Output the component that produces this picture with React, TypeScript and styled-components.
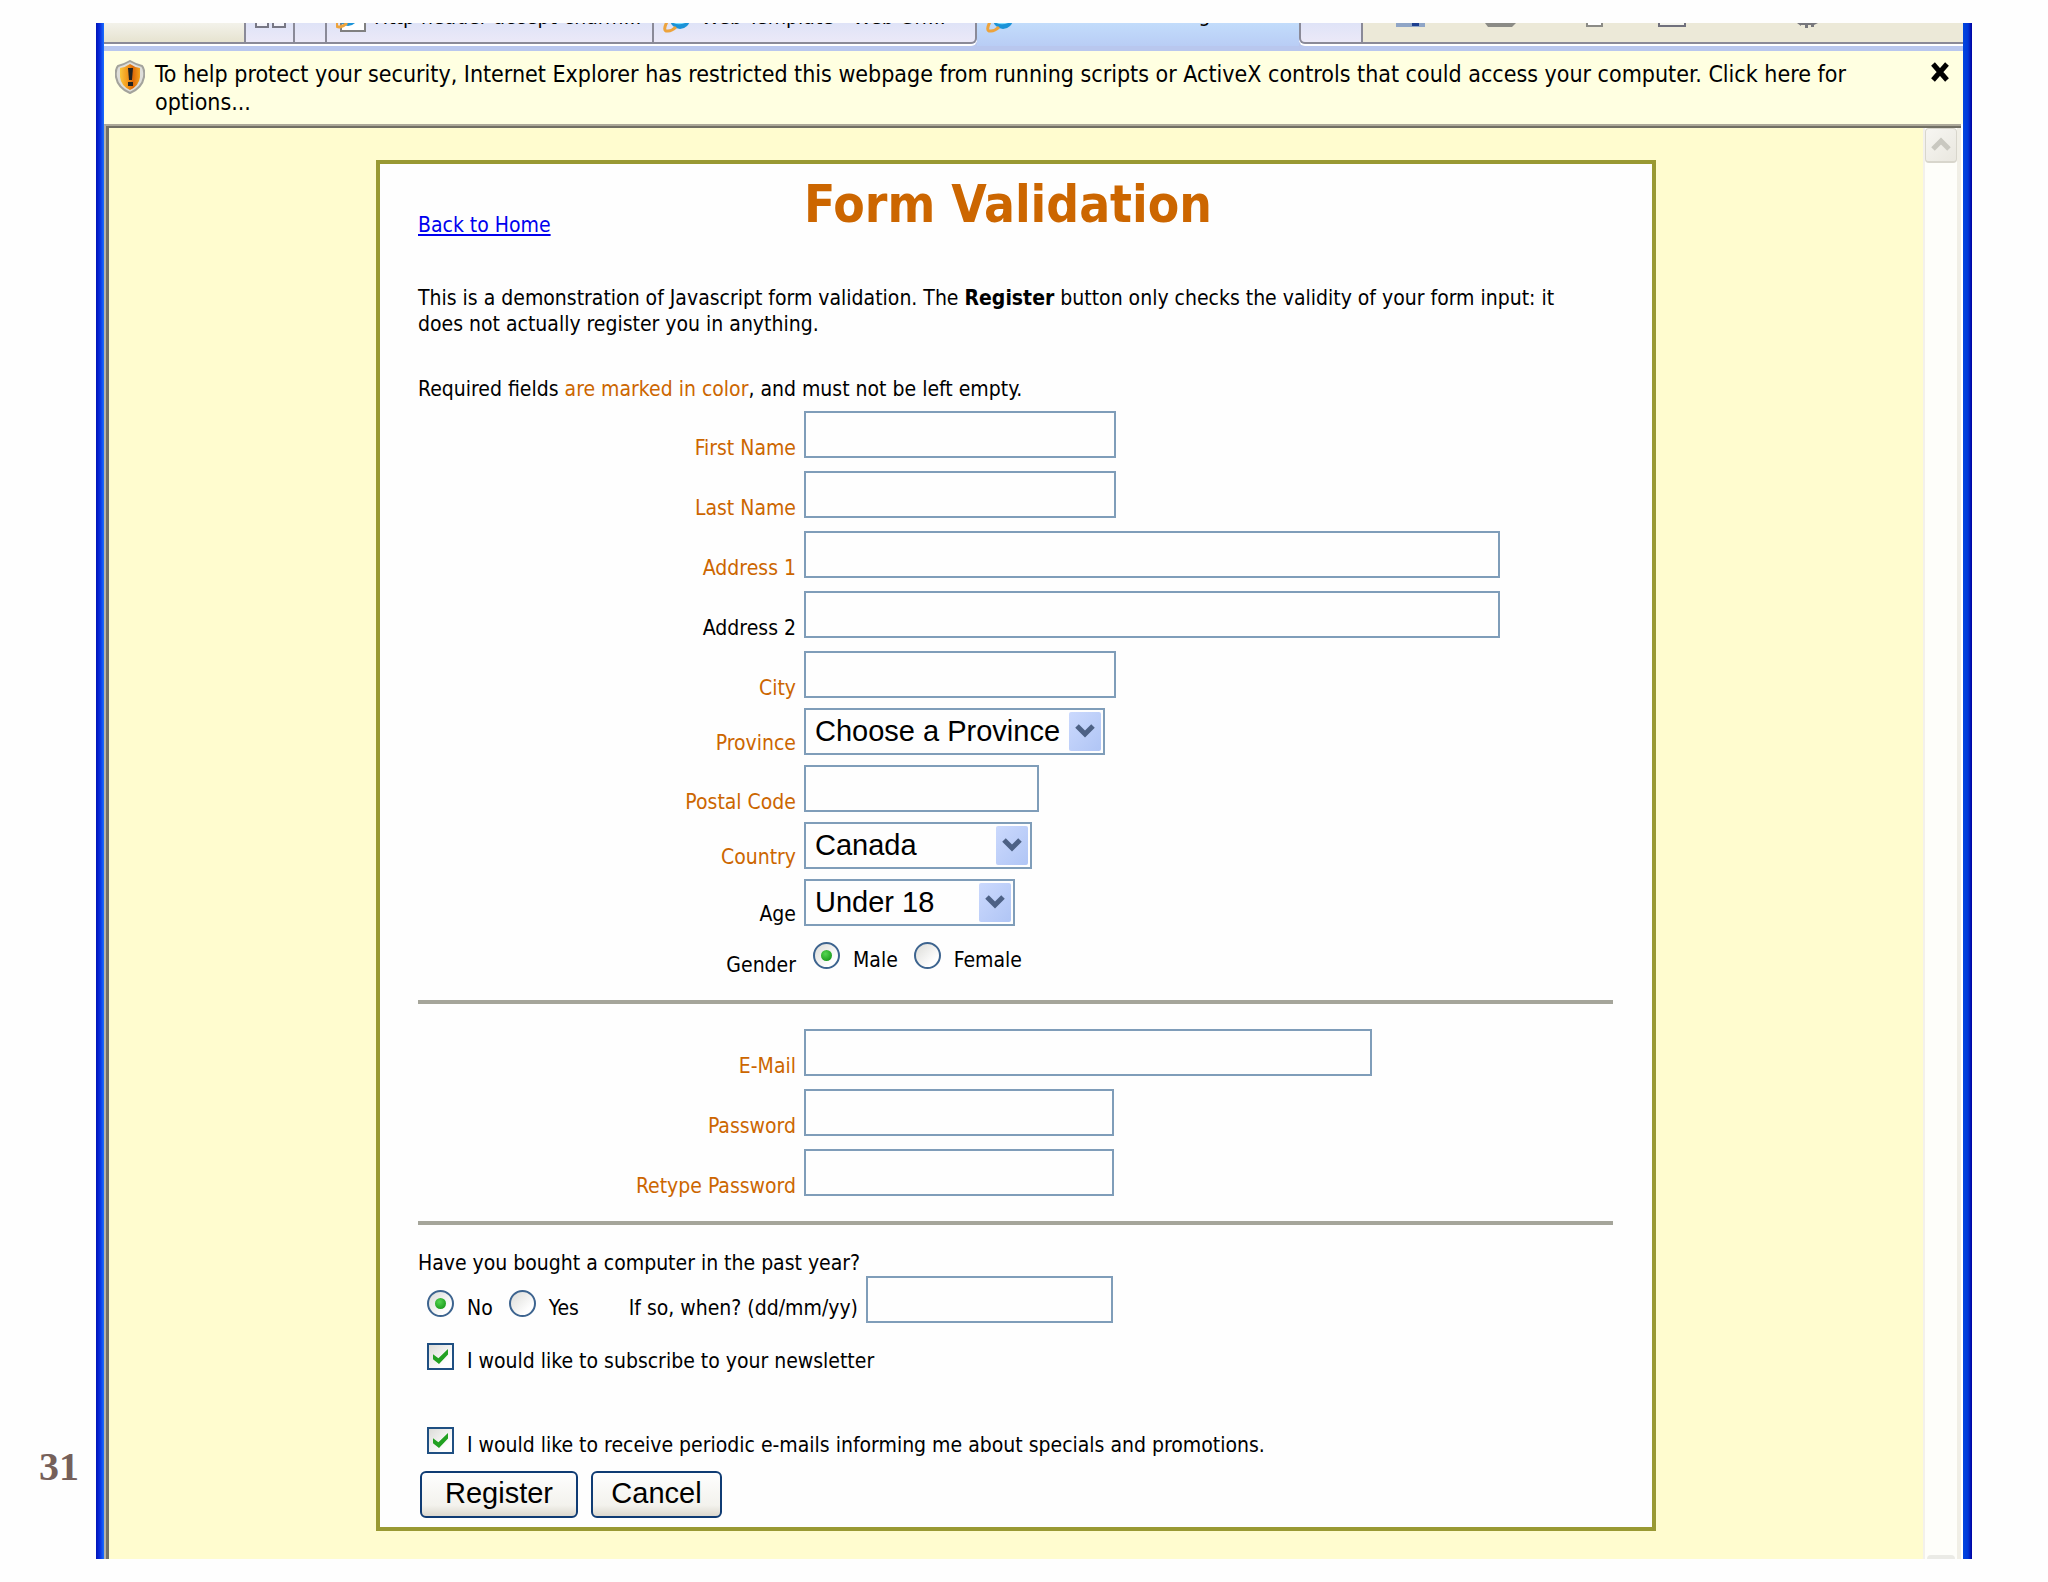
import React, { useState } from "react";
import styled, { createGlobalStyle, css } from "styled-components";

const uiFont = `"DejaVu Sans Condensed", "DejaVu Sans", "Noto Sans", sans-serif`;
const controlFont = `"Liberation Sans", Arial, sans-serif`;
const orange = "#cc6600";
const fieldBorder = "#7f9db9";

const GlobalStyle = createGlobalStyle`
  *, *::before, *::after { box-sizing: border-box; }
  body {
    margin: 0;
    background: #fefefe;
    color: #000;
    font-family: ${uiFont};
    font-stretch: condensed;
    font-size: 21px;
    line-height: 26px;
  }
`;

const Slide = styled.div`
  display: grid;
  grid-template-columns: 96px minmax(0, 1fr) 76px;
  padding: 23px 0;
`;

const PageNumber = styled.div`
  align-self: end;
  padding: 0 17px 72px 0;
  text-align: right;
  font: bold 40px/40px "Liberation Serif", "Times New Roman", serif;
  color: #75605a;
`;

const BrowserWindow = styled.div`
  padding: 0 9px 0 8px;
  background:
    linear-gradient(90deg, #0014b8 0, #0a2fe0 4px, #1a70ff 8px) left / 8px 100% no-repeat,
    linear-gradient(90deg, #0046e0 0, #0038d8 5px, #0000a0 9px) right / 9px 100% no-repeat,
    #fff;
`;

const TabStrip = styled.div`
  display: flex;
  height: 28px;
  overflow: hidden;
  background: #b9c7ee;
  padding-bottom: 5px;
`;

const StripSpace = styled.div<{ $grow?: boolean }>`
  flex: ${(p) => (p.$grow ? "1 1 0" : "0 1 140px")};
  display: flex;
  padding-left: ${(p) => (p.$grow ? "33px" : "0")};
  background: ${(p) => (p.$grow ? "#ece9d8" : "linear-gradient(#f3f2ea, #e6e3d0)")};
  border-bottom: 2px solid #8a8a98;
  box-shadow: 0 2px #fff;
  margin-bottom: 2px;
`;

const Tab = styled.button<{ $width: number; $active?: boolean; $round?: "left" | "right" }>`
  flex: 0 1 ${(p) => p.$width}px;
  min-width: 0;
  display: flex;
  align-items: flex-end;
  gap: 8px;
  overflow: hidden;
  white-space: nowrap;
  margin: 0 0 2px;
  padding: 0 0 ${(p) => (p.$active ? "13px" : "9px")} 9px;
  border: 0 solid #8a8a98;
  border-bottom-width: 2px;
  border-left-width: 2px;
  background: linear-gradient(#dfe3f7, #ebe9f8);
  box-shadow: 0 2px #fff;
  color: #000;
  font: 21px/26px ${uiFont};
  ${(p) => p.$round === "right" && css`border-right-width: 2px; border-bottom-right-radius: 6px;`}
  ${(p) => p.$round === "left" && css`border-right-width: 2px; border-bottom-left-radius: 6px;`}
  ${(p) =>
    p.$active &&
    css`
      margin: 0;
      border: 0;
      box-shadow: none;
      background: linear-gradient(#c2dcfb, #b9cdf5);
    `}
`;

const TabTitle = styled.span<{ $active?: boolean }>`
  padding-bottom: ${(p) => (p.$active ? 5 : 3)}px;
`;

const TabArt = styled.svg`
  flex: none;
  display: block;
`;

const InfoBar = styled.div`
  display: grid;
  grid-template-columns: 30px minmax(0, 1fr) 20px;
  column-gap: 10px;
  align-items: start;
  padding: 9px 13px 8px 11px;
  background: #ffffe1;
  font-size: 23px;
  line-height: 28px;
`;

const InfoText = styled.p`
  margin: 0;
  padding-right: 60px;
`;

const CloseButton = styled.button`
  padding: 2px 0;
  border: 0;
  background: none;
  line-height: 0;
`;

const Viewport = styled.div`
  border-top: 2px solid #aca899;
  border-left: 2px solid #b5b2a8;
  margin-right: 2px;
`;

const ScrollPane = styled.div`
  display: grid;
  grid-template-columns: minmax(0, 1fr) 38px;
  border-top: 2px solid #716f64;
  border-left: 3px solid #716f64;
`;

const Page = styled.main`
  padding: 32px 20px 28px;
  background: #fffccf;
`;

const ScrollTrack = styled.div`
  display: flex;
  flex-direction: column;
  justify-content: space-between;
  align-items: center;
  overflow: hidden;
  border-left: 2px solid #f3f1ec;
  border-right: 4px solid #f1efe6;
  background: #fefefa;
`;

const ScrollButton = styled.button`
  width: 32px;
  height: 35px;
  padding: 0;
  border: 1px solid #d8d6cc;
  border-bottom-width: 2px;
  border-radius: 4px;
  background: linear-gradient(135deg, #f7f6f2, #e9e7df);
  line-height: 0;
`;

const TrackEnd = styled.div`
  width: 28px;
  height: 4px;
  border-radius: 4px 4px 0 0;
  background: #ebebe6;
`;

const Card = styled.form`
  max-width: 1280px;
  margin: 0 auto;
  padding: 8px 39px 9px 38px;
  border: 4px solid #999933;
  background: #fefefe;
`;

const columns = css`
  display: grid;
  grid-template-columns: 378px minmax(0, 1fr);
  column-gap: 8px;
  align-items: end;
`;

const Header = styled.header`
  ${columns}
`;

const Title = styled.h1`
  margin: 0;
  font-size: 51px;
  line-height: 66px;
  font-weight: bold;
  color: ${orange};
`;

const BackLink = styled.a`
  justify-self: start;
  color: #0000ee;
  text-decoration: underline;
`;

const Paragraph = styled.p<{ $top: number }>`
  margin: ${(p) => p.$top}px 0 0;
  padding-right: 40px;
`;

const Required = styled.span`
  color: ${orange};
`;

const FieldGroup = styled.div<{ $gap: number; $top?: number }>`
  display: grid;
  row-gap: ${(p) => p.$gap}px;
  margin-top: ${(p) => p.$top ?? 0}px;
`;

const Row = styled.div`
  ${columns}
`;

const FieldLabel = styled.label<{ $required?: boolean; $raised?: boolean }>`
  text-align: right;
  line-height: ${(p) => (p.$raised ? 24 : 20)}px;
  color: ${(p) => (p.$required ? orange : "#000")};
`;

const TextBox = styled.input<{ $width: number }>`
  width: ${(p) => p.$width}px;
  max-width: 100%;
  height: 47px;
  padding: 0 8px;
  border: 2px solid ${fieldBorder};
  border-radius: 0;
  background: #fefefe;
  font: 29px ${controlFont};
`;

const SelectFrame = styled.span<{ $width: number }>`
  display: grid;
  grid-template-columns: minmax(0, 1fr) 32px;
  align-items: center;
  width: ${(p) => p.$width}px;
  height: 47px;
  padding-right: 2px;
  border: 2px solid ${fieldBorder};
  background: #fefefe;
`;

const SelectBox = styled.select`
  grid-area: 1 / 1 / 2 / 3;
  appearance: none;
  height: 43px;
  padding: 0 36px 2px 9px;
  border: 0;
  background: transparent;
  color: #000;
  font: 29px ${controlFont};
`;

const SelectArrow = styled.svg`
  grid-area: 1 / 2 / 2 / 3;
  pointer-events: none;
`;

const Options = styled.div<{ $top?: number }>`
  display: flex;
  align-items: flex-end;
  gap: 7px;
  padding: ${(p) => p.$top ?? 0}px 0 2px;
`;

const OptionLabel = styled.label<{ $top?: number }>`
  display: flex;
  align-items: flex-end;
  gap: 13px;
  padding-left: 9px;
  margin-top: ${(p) => p.$top ?? 0}px;
`;

const choice = css`
  appearance: none;
  flex: none;
  display: grid;
  place-items: center;
  width: 27px;
  height: 27px;
  margin: 0 0 4px;
  border: 2px solid #1f4f82;
  background: linear-gradient(135deg, #dcdcd8, #fefefe 75%);
`;

const Radio = styled.input.attrs({ type: "radio" })`
  ${choice}
  border-color: #3d648f;
  border-radius: 50%;
  &:checked::before {
    content: "";
    width: 11px;
    height: 11px;
    border-radius: 50%;
    background: radial-gradient(circle at 40% 35%, #55d551, #21a121 70%);
  }
`;

const Checkbox = styled.input.attrs({ type: "checkbox" })`
  ${choice}
  &:checked::before {
    content: "";
    width: 15px;
    height: 15px;
    background: #21a121;
    clip-path: polygon(0 35%, 36% 62%, 100% 0, 100% 36%, 40% 100%, 0 68%);
  }
`;

const WhenLabel = styled.label`
  margin-left: auto;
`;

const WhenRow = styled.div`
  display: grid;
  grid-template-columns: 440px minmax(0, 1fr);
  column-gap: 8px;
  align-items: end;
`;

const Divider = styled.hr`
  height: 4px;
  margin: 25px 0;
  border: 0;
  background: #a5a59a;
`;

const Buttons = styled.div`
  display: flex;
  gap: 13px;
  margin-top: 13px;
  padding-left: 2px;
`;

const Button = styled.button<{ $width: number }>`
  width: ${(p) => p.$width}px;
  height: 47px;
  padding: 0 0 3px;
  border: 2px solid #0f3b73;
  border-radius: 6px;
  background: linear-gradient(#fefefe, #f3f2ed 75%, #dcd8ce);
  color: #000;
  font: 29px ${controlFont};
`;

const PageIcon = ({ sheet = false }: { sheet?: boolean }) => (
  <TabArt width="30" height="30" viewBox="0 0 30 30" aria-hidden="true">
    {sheet && <path d="M5 2H29V28H5Z" fill="#fff" stroke="#808080" strokeWidth="2" />}
    <circle cx={sheet ? 12 : 17} cy={sheet ? 13 : 16} r="10" fill="#1b93d8" />
    <path d={sheet ? "M6 15Q12 19 20 14" : "M10 18Q16 22 25 17"} stroke="#7fdcff" strokeWidth="3" fill="none" />
    <path d={sheet ? "M4 12Q-3 25 4 24Q8 23 11 20" : "M6 15Q-2 29 5 28Q9 28 13 24"} stroke="#eda33c" strokeWidth="3" fill="none" />
  </TabArt>
);

const Shield = () => (
  <svg width="30" height="34" viewBox="0 0 30 34" aria-hidden="true">
    <defs>
      <linearGradient id="shield" x1="0" y1="0" x2="1" y2="0">
        <stop offset="0" stopColor="#fbc63e" />
        <stop offset="0.35" stopColor="#f39a1c" />
        <stop offset="0.65" stopColor="#dd6a08" />
        <stop offset="1" stopColor="#f6a31c" />
      </linearGradient>
    </defs>
    <path d="M15 1Q20 4 27 6Q30 9 29 17Q27 28 15 33Q3 28 1 17Q0 9 3 6Q10 4 15 1Z" fill="#dededa" stroke="#a3a39c" strokeWidth="2" />
    <path d="M15 4Q19 7 25 8V17Q24 26 15 30Q6 26 5 17V8Q11 7 15 4Z" fill="url(#shield)" />
    <path d="M13 8H18L17 20H14Z" fill="#222" />
    <rect x="13" y="22" width="5" height="4" fill="#222" />
  </svg>
);

const ToolbarArt = () => (
  <TabArt width="440" height="6" viewBox="0 0 440 6" aria-hidden="true">
    <path d="M0 0H29V4H0Z" fill="#8fa5c6" />
    <path d="M16 0H23V3H16Z" fill="#1d3f8f" />
    <path d="M89 0H120L116 4H92Z" fill="#8b8b86" />
    <path d="M191 0V3H206V0" fill="#fff" stroke="#8b8b86" strokeWidth="2" />
    <path d="M263 0V3H289V0" fill="#f5f5ee" stroke="#70707c" strokeWidth="2" />
    <path d="M401 0H422L418 2V4H415V2H412V5H409V2H405V3Z" fill="#77777c" />
  </TabArt>
);

type Option = { label: string; value: string };

const Select = ({ id, width, options }: { id: string; width: number; options: Option[] }) => (
  <SelectFrame $width={width}>
    <SelectBox id={id} defaultValue={options[0].value}>
      {options.map((o) => (
        <option key={o.value} value={o.value}>{o.label}</option>
      ))}
    </SelectBox>
    <SelectArrow width="32" height="39" viewBox="0 0 32 39" aria-hidden="true">
      <defs>
        <linearGradient id={`${id}-fill`} x1="0" y1="0" x2="1" y2="1">
          <stop offset="0" stopColor="#cbd9fd" />
          <stop offset="1" stopColor="#b0c5f5" />
        </linearGradient>
      </defs>
      <rect x="0" y="0" width="32" height="39" rx="2" fill={`url(#${id}-fill)`} />
      <path d="M8 14L16 22L24 14" fill="none" stroke="#4d6185" strokeWidth="5" />
    </SelectArrow>
  </SelectFrame>
);

type TextFieldProps = { id: string; label: string; width: number; optional?: boolean; type?: string };

const TextField = ({ id, label, width, optional, type = "text" }: TextFieldProps) => (
  <Row>
    <FieldLabel htmlFor={id} $required={!optional}>{label}</FieldLabel>
    <TextBox id={id} type={type} $width={width} />
  </Row>
);

export default function App() {
  const [gender, setGender] = useState("male");
  const [bought, setBought] = useState("no");

  return (
    <>
      <GlobalStyle />
      <Slide>
        <PageNumber>31</PageNumber>
        <BrowserWindow>
          <TabStrip>
            <StripSpace />
            <Tab type="button" $width={49} aria-label="Quick tabs">
              <TabArt width="32" height="22" viewBox="0 0 32 22" aria-hidden="true">
                <path d="M1 0V16H13V0M18 0V16H30V0" fill="#f4f4fb" stroke="#777784" strokeWidth="2" />
              </TabArt>
            </Tab>
            <Tab type="button" $width={32} aria-label="Tab list" />
            <Tab type="button" $width={327}>
              <PageIcon sheet />
              <TabTitle>Http header accept-charm...</TabTitle>
            </Tab>
            <Tab type="button" $width={325} $round="right">
              <PageIcon />
              <TabTitle>Web Template - Web Grr...</TabTitle>
            </Tab>
            <Tab type="button" $width={322} $active>
              <PageIcon />
              <TabTitle $active>Form Validation Page</TabTitle>
            </Tab>
            <Tab type="button" $width={64} $round="left" aria-label="New tab" />
            <StripSpace $grow>
              <ToolbarArt />
            </StripSpace>
          </TabStrip>
          <InfoBar>
            <Shield />
            <InfoText>
              To help protect your security, Internet Explorer has restricted this webpage from running scripts or
              ActiveX controls that could access your computer. Click here for options...
            </InfoText>
            <CloseButton type="button" aria-label="Close">
              <svg width="20" height="20" viewBox="0 0 20 20" aria-hidden="true">
                <path d="M3 2L17 18M17 2L3 18" stroke="#000" strokeWidth="5" />
              </svg>
            </CloseButton>
          </InfoBar>
          <Viewport>
            <ScrollPane>
              <Page>
                <Card onSubmit={(e) => e.preventDefault()}>
                  <Header>
                    <BackLink href="#home">Back to Home</BackLink>
                    <Title>Form Validation</Title>
                  </Header>
                  <Paragraph $top={47}>
                    This is a demonstration of Javascript form validation. The <b>Register</b> button only checks the
                    validity of your form input: it does not actually register you in anything.
                  </Paragraph>
                  <Paragraph $top={39}>
                    Required fields <Required>are marked in color</Required>, and must not be left empty.
                  </Paragraph>

                  <FieldGroup $gap={13} $top={9}>
                    <TextField id="first" label="First Name" width={312} />
                    <TextField id="last" label="Last Name" width={312} />
                    <TextField id="address1" label="Address 1" width={696} />
                    <TextField id="address2" label="Address 2" width={696} optional />
                    <TextField id="city" label="City" width={312} />
                  </FieldGroup>
                  <FieldGroup $gap={10} $top={10}>
                    <Row>
                      <FieldLabel htmlFor="province" $required $raised>Province</FieldLabel>
                      <Select id="province" width={301} options={[
                        { value: "", label: "Choose a Province" },
                        { value: "on", label: "Ontario" },
                        { value: "qc", label: "Quebec" },
                      ]} />
                    </Row>
                    <TextField id="postal" label="Postal Code" width={235} />
                    <Row>
                      <FieldLabel htmlFor="country" $required $raised>Country</FieldLabel>
                      <Select id="country" width={228} options={[
                        { value: "ca", label: "Canada" },
                        { value: "us", label: "USA" },
                      ]} />
                    </Row>
                    <Row>
                      <FieldLabel htmlFor="age" $raised>Age</FieldLabel>
                      <Select id="age" width={211} options={[
                        { value: "u18", label: "Under 18" },
                        { value: "18", label: "18 - 65" },
                      ]} />
                    </Row>
                    <Row role="radiogroup" aria-labelledby="gender-label">
                      <FieldLabel as="span" id="gender-label">Gender</FieldLabel>
                      <Options $top={6}>
                        <OptionLabel>
                          <Radio name="gender" checked={gender === "male"} onChange={() => setGender("male")} />
                          Male
                        </OptionLabel>
                        <OptionLabel>
                          <Radio name="gender" checked={gender === "female"} onChange={() => setGender("female")} />
                          Female
                        </OptionLabel>
                      </Options>
                    </Row>
                  </FieldGroup>

                  <Divider />
                  <FieldGroup $gap={13}>
                    <TextField id="email" label="E-Mail" width={568} type="email" />
                    <TextField id="password" label="Password" width={310} type="password" />
                    <TextField id="retype" label="Retype Password" width={310} type="password" />
                  </FieldGroup>
                  <Divider />

                  <Paragraph $top={0} id="bought-label">Have you bought a computer in the past year?</Paragraph>
                  <WhenRow>
                    <Options role="radiogroup" aria-labelledby="bought-label">
                      <OptionLabel>
                        <Radio name="bought" checked={bought === "no"} onChange={() => setBought("no")} />
                        No
                      </OptionLabel>
                      <OptionLabel>
                        <Radio name="bought" checked={bought === "yes"} onChange={() => setBought("yes")} />
                        Yes
                      </OptionLabel>
                      <WhenLabel htmlFor="when">If so, when? (dd/mm/yy)</WhenLabel>
                    </Options>
                    <TextBox id="when" type="text" $width={247} />
                  </WhenRow>
                  <OptionLabel $top={20}>
                    <Checkbox defaultChecked />
                    I would like to subscribe to your newsletter
                  </OptionLabel>
                  <OptionLabel $top={53}>
                    <Checkbox defaultChecked />
                    I would like to receive periodic e-mails informing me about specials and promotions.
                  </OptionLabel>
                  <Buttons>
                    <Button type="submit" $width={158}>Register</Button>
                    <Button type="reset" $width={131}>Cancel</Button>
                  </Buttons>
                </Card>
              </Page>
              <ScrollTrack>
                <ScrollButton type="button" aria-label="Scroll up">
                  <svg width="22" height="16" viewBox="0 0 22 16" aria-hidden="true">
                    <path d="M3 12L11 4L19 12" fill="none" stroke="#c9c8c0" strokeWidth="5" />
                  </svg>
                </ScrollButton>
                <TrackEnd />
              </ScrollTrack>
            </ScrollPane>
          </Viewport>
        </BrowserWindow>
      </Slide>
    </>
  );
}
